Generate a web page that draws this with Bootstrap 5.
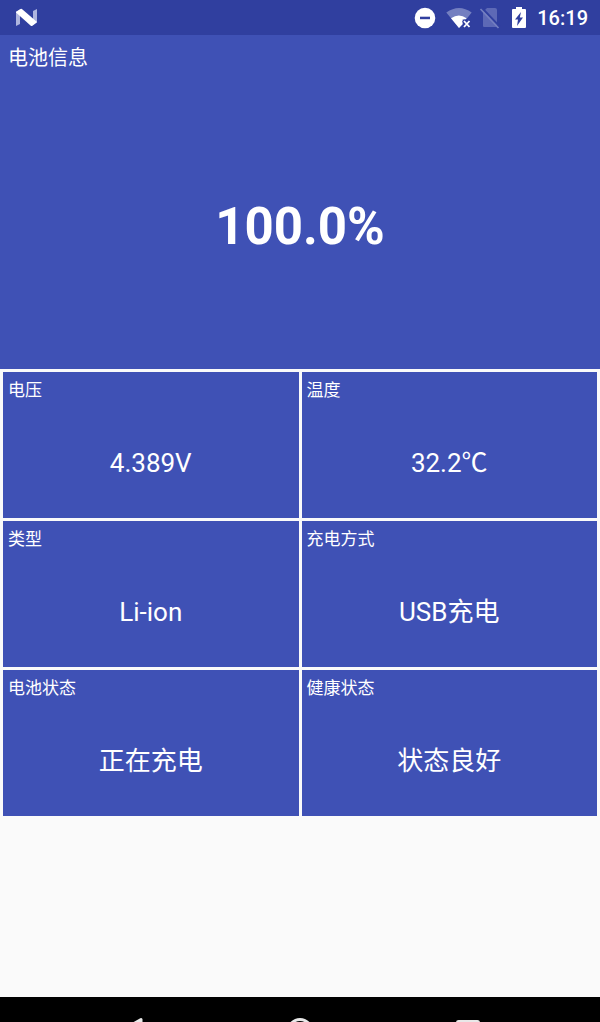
<!DOCTYPE html>
<html lang="zh-CN">
<head>
<meta charset="utf-8">
<meta name="viewport" content="width=device-width, initial-scale=1">
<title>电池信息</title>
<link href="https://cdn.jsdelivr.net/npm/bootstrap@5.3.0/dist/css/bootstrap.min.css" rel="stylesheet">
<style>
  body { background: #fafafa; color: #fff; font-family: Roboto, "Noto Sans CJK SC", sans-serif; }
  .status-bar { background: #303f9f; height: 35px; padding: 0 12px 0 15px; font-size: 20px; font-weight: 500; line-height: 24px; }
  .status-bar svg, .soft-keys svg { display: block; flex: none; }
  .status-icons { gap: 7px; }
  .status-icons .quiet { margin-right: 3px; }
  .status-icons .charge { margin: 0 3px; }
  .tile { background: #3f51b5; }
  .level { height: 334px; padding: 8px; }
  .level h1 { font-size: 20px; font-weight: 400; line-height: 30px; }
  .level-value { font-size: 51px; line-height: 60px; padding-top: 20px; }
  .tile-grid { display: grid; grid-template-columns: 1fr 1fr; gap: 3px; padding: 3px; background: #fafafa; }
  .reading { height: 146px; padding: 5px; }
  .reading h2 { font-size: 17px; font-weight: 400; line-height: 26px; }
  .reading p { font-size: 26px; line-height: 36px; padding-top: 10px; }
  .soft-keys { background: #000; height: 25px; padding: 20px 48px 0; }
  .soft-keys button { height: 28px; }
</style>
</head>
<body>
<div class="d-flex flex-column vh-100 overflow-hidden">
  <header class="status-bar d-flex align-items-center justify-content-between">
    <svg width="24" height="20" viewBox="0 0 24 20" aria-hidden="true">
      <path fill="#aeb5df" d="M1 4 5 1.500V16L1 18zM18 3 22 1V14.500L18 17z"/>
      <path fill="#fff" d="M1 3.800 5.500 1Q6.500.6 7.500 1.400L22 14 17.500 17.800Q16.500 18.200 15.500 17.400L1 4.500z"/>
    </svg>
    <div class="status-icons d-flex align-items-center">
      <svg class="quiet" width="22" height="22" viewBox="0 0 22 22" aria-hidden="true">
        <circle cx="11" cy="11" r="10.300" fill="#fff"/><path fill="#303f9f" d="M6 9.700H16V12.200H6z"/>
      </svg>
      <svg width="26" height="22" viewBox="0 0 26 22" aria-hidden="true">
        <path fill="#747fc0" d="M.3 5.500Q13-3.500 25.700 5.500L20.500 12H17V17L13 21z"/>
        <path fill="#fff" d="M5 11.200Q13 6 20.500 11.200L19.500 12.500H16.500V17.200L13 21z"/>
        <path stroke="#303f9f" stroke-width="4" d="M17.500 13.500 24 20.500M24 13.500 17.500 20.500"/>
        <path stroke="#fff" stroke-width="1.800" d="M18 14 23.500 20M23.500 14 18 20"/>
      </svg>
      <svg width="22" height="22" viewBox="0 0 22 22" aria-hidden="true">
        <path fill="#5d69b6" d="M8 1H16Q18 1 18 3V20H5Q4 20 4 19V5z"/>
        <path stroke="#303f9f" stroke-width="2" d="M3 1 21 20"/>
        <path stroke="#747fc0" stroke-width="1.700" d="M1.500 2 19.500 21"/>
      </svg>
      <svg class="charge" width="16" height="22" viewBox="0 0 16 22" aria-hidden="true">
        <path fill="#fff" d="M5 0H11V2H14Q15 2 15 3V20Q15 21 14 21H2Q1 21 1 20V3Q1 2 2 2H5z"/>
        <path fill="#303f9f" d="M10 5 4 12.500H7L6 19 12 10.500H8.800z"/>
      </svg>
      <time>16:19</time>
    </div>
  </header>

  <main class="flex-grow-1">
    <section class="tile level d-flex flex-column">
      <h1 class="m-0">电池信息</h1>
      <div class="level-value flex-grow-1 d-flex align-items-center justify-content-center fw-bold">100.0%</div>
    </section>
    <div class="tile-grid">
      <section class="tile reading d-flex flex-column">
        <h2 class="m-0">电压</h2>
        <p class="m-0 flex-grow-1 d-flex align-items-center justify-content-center">4.389V</p>
      </section>
      <section class="tile reading d-flex flex-column">
        <h2 class="m-0">温度</h2>
        <p class="m-0 flex-grow-1 d-flex align-items-center justify-content-center">32.2℃</p>
      </section>
      <section class="tile reading d-flex flex-column">
        <h2 class="m-0">类型</h2>
        <p class="m-0 flex-grow-1 d-flex align-items-center justify-content-center">Li-ion</p>
      </section>
      <section class="tile reading d-flex flex-column">
        <h2 class="m-0">充电方式</h2>
        <p class="m-0 flex-grow-1 d-flex align-items-center justify-content-center">USB充电</p>
      </section>
      <section class="tile reading d-flex flex-column">
        <h2 class="m-0">电池状态</h2>
        <p class="m-0 flex-grow-1 d-flex align-items-center justify-content-center">正在充电</p>
      </section>
      <section class="tile reading d-flex flex-column">
        <h2 class="m-0">健康状态</h2>
        <p class="m-0 flex-grow-1 d-flex align-items-center justify-content-center">状态良好</p>
      </section>
    </div>
  </main>

  <nav class="soft-keys d-flex flex-shrink-0 overflow-hidden" aria-label="系统导航">
    <button type="button" class="btn p-0 border-0 flex-fill d-flex justify-content-center" aria-label="返回">
      <svg width="28" height="28" viewBox="0 0 28 28"><path fill="#e8e8e8" stroke="#e8e8e8" stroke-width="3" stroke-linejoin="round" d="M23 2.500V25.500L3 14z"/></svg>
    </button>
    <button type="button" class="btn p-0 border-0 flex-fill d-flex justify-content-center" aria-label="主屏幕">
      <svg width="28" height="28" viewBox="0 0 28 28"><circle cx="14" cy="14" r="11.500" fill="none" stroke="#e8e8e8" stroke-width="3"/></svg>
    </button>
    <button type="button" class="btn p-0 border-0 flex-fill d-flex justify-content-center" aria-label="最近任务">
      <svg width="28" height="28" viewBox="0 0 28 28"><rect x="3.500" y="4.500" width="21" height="21" rx="1" fill="none" stroke="#e8e8e8" stroke-width="3"/></svg>
    </button>
  </nav>
</div>
<script src="https://cdn.jsdelivr.net/npm/bootstrap@5.3.0/dist/js/bootstrap.bundle.min.js"></script>
</body>
</html>
